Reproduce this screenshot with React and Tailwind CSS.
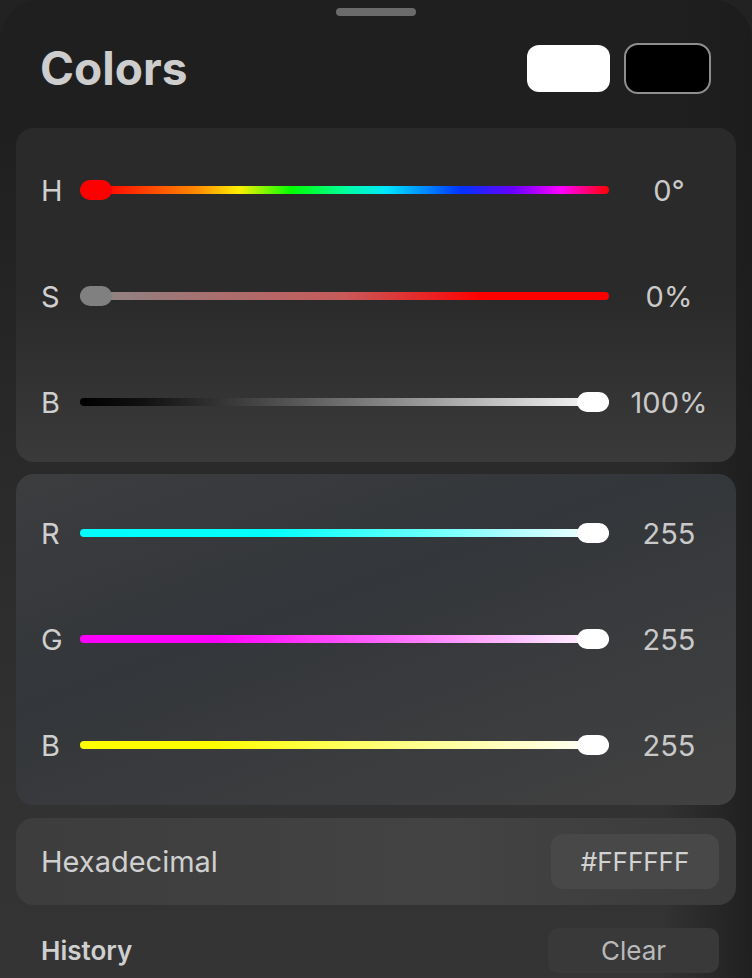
import React from 'react';

const font = { fontFamily: 'Inter, "Noto Sans", sans-serif' };

const hsb = [
  {
    label: 'H',
    value: '0°',
    track: 'bg-[linear-gradient(90deg,#ff0000_0%,#ff0000_4%,#ff8a00_22%,#ffee00_30%,#00ff00_40%,#00ff9c_50%,#00e6ff_58%,#0033ff_72%,#6a00ff_82%,#ff00ff_91%,#ff0000_100%)]',
    thumb: 'left-0 bg-[#ff0000]',
  },
  {
    label: 'S',
    value: '0%',
    track: 'bg-[linear-gradient(90deg,#8a8a8a_0%,#9c7878_15%,#c85a5a_50%,#ff0000_76%,#ff0000_100%)]',
    thumb: 'left-0 bg-[#808080]',
  },
  {
    label: 'B',
    value: '100%',
    track: 'bg-[linear-gradient(90deg,#000000_0%,#111111_12%,#555555_40%,#9a9a9a_65%,#ffffff_100%)]',
    thumb: 'right-0 bg-white',
  },
];

const rgb = [
  {
    label: 'R',
    value: '255',
    track: 'bg-[linear-gradient(90deg,#00ffff_0%,#00ffff_35%,#66ffff_65%,#ffffff_100%)]',
    thumb: 'right-0 bg-white',
  },
  {
    label: 'G',
    value: '255',
    track: 'bg-[linear-gradient(90deg,#ff00ff_0%,#ff00ff_25%,#ff77ff_62%,#ffffff_100%)]',
    thumb: 'right-0 bg-white',
  },
  {
    label: 'B',
    value: '255',
    track: 'bg-[linear-gradient(90deg,#ffff00_0%,#ffff00_25%,#ffff88_62%,#ffffff_100%)]',
    thumb: 'right-0 bg-white',
  },
];

function SliderRow({ row }) {
  return (
    <div className="flex items-center h-[106px]">
      <div className="w-[39px] text-[29px] leading-none text-[#cfcfcf]">{row.label}</div>
      <div className={`relative flex-1 h-[8px] rounded-full ${row.track}`}>
        <div className={`absolute top-1/2 -translate-y-1/2 w-[32px] h-[20px] rounded-full ${row.thumb}`} />
      </div>
      <div className="w-[90px] ml-[15px] text-center text-[29px] leading-none text-[#c9c9c9]">{row.value}</div>
    </div>
  );
}

export default function App() {
  return (
    <div className="min-h-screen bg-[#222222]" style={font}>
      <div className="h-[978px] overflow-hidden rounded-t-[40px] bg-[linear-gradient(90deg,transparent_88%,rgba(28,28,28,0.85)_100%),linear-gradient(180deg,#1f1f1f_0%,#1f1f1f_13%,#292929_45%,#323232_82%,#343434_100%)]">
        {/* grab handle */}
        <div className="flex justify-center pt-[8px]">
          <div className="w-[80px] h-[8px] rounded-full bg-[#6b6b6b]" />
        </div>

        {/* header */}
        <div className="flex items-center justify-between h-[104px] pl-[40px] pr-[41px]">
          <h1 className="text-[46px] font-bold leading-none text-[#cdcdcd]">Colors</h1>
          <div className="flex items-center gap-[14px]">
            <div className="w-[83px] h-[47px] rounded-[12px] bg-white" />
            <div className="w-[87px] h-[51px] rounded-[14px] border-2 border-[#8e8e8e] bg-black" />
          </div>
        </div>

        <div className="mx-[16px] mt-[8px]">
          {/* HSB */}
          <div className="rounded-[18px] pl-[25px] pr-[22px] pt-[9px] pb-[7px] bg-[linear-gradient(180deg,#2a2a2a_0%,#2a2a2a_50%,#3a3a3a_100%)]">
            {hsb.map((r) => (
              <SliderRow key={r.label + r.value} row={r} />
            ))}
          </div>

          {/* RGB */}
          <div className="mt-[12px] rounded-[18px] pl-[25px] pr-[22px] pt-[6px] pb-[7px] bg-[linear-gradient(160deg,#3c3d3f_0%,#33363a_40%,#3b3c3e_70%,#414141_100%)]">
            {rgb.map((r) => (
              <SliderRow key={r.label} row={r} />
            ))}
          </div>

          {/* hex */}
          <div className="mt-[13px] h-[87px] rounded-[18px] flex items-center justify-between pl-[25px] pr-[17px] bg-[linear-gradient(90deg,#3d3d3d_0%,#434343_60%,#3b3b3b_100%)]">
            <span className="text-[29px] leading-none text-[#d0d0d0]">Hexadecimal</span>
            <div className="w-[168px] h-[55px] rounded-[12px] bg-[#484848] flex items-center justify-center text-[26px] leading-none text-[#d2d2d2]">
              #FFFFFF
            </div>
          </div>

          {/* history */}
          <div className="mt-[23px] flex items-center justify-between pl-[25px] pr-[17px]">
            <span className="text-[26px] font-semibold leading-none text-[#cfcfcf]">History</span>
            <div className="w-[171px] h-[45px] rounded-[10px] bg-[#393939] flex items-center justify-center text-[26px] leading-none text-[#b9b9b9]">
              Clear
            </div>
          </div>
        </div>
      </div>
    </div>
  );
}
